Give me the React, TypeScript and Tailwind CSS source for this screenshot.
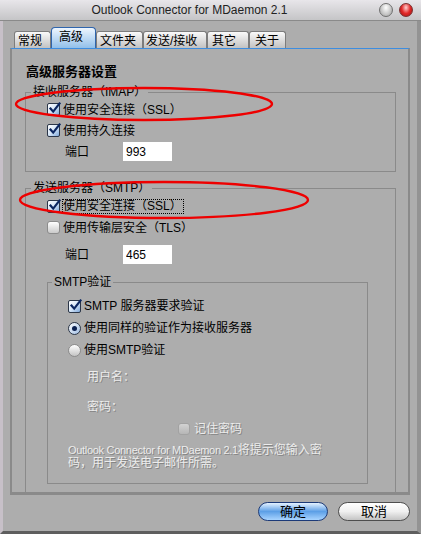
import React from "react";

const tabs = [
  { label: "常规", cls: "w-[37px] pl-[3px]" },
  { label: "高级", cls: "w-[45px] pl-[7px]", active: true },
  { label: "文件夹", cls: "w-[47px] pl-[3px]" },
  { label: "发送/接收", cls: "w-[64px] pl-[2px]" },
  { label: "其它", cls: "w-[42px] pl-[4px]" },
  { label: "关于", cls: "w-[37px] pl-[5px]" },
];

const Check = ({ checked, disabled }: { checked?: boolean; disabled?: boolean }) => {
  if (disabled) {
    return <div className="w-[12px] h-[12px] shrink-0 rounded-[3px] border border-[#a2a2a2] bg-linear-to-b from-[#d2d2d2] to-[#b6b6b6]" />;
  }
  if (!checked) {
    return <div className="w-[13px] h-[13px] shrink-0 rounded-[3px] border border-[#8c8c8c] bg-linear-to-b from-[#ffffff] to-[#cacaca]" />;
  }
  return (
    <div className="relative w-[13px] h-[13px] shrink-0 rounded-[2px] border border-[#2b3648] bg-linear-to-br from-[#ffffff] via-[#d6e6f8] to-[#7fa8da]">
      <svg width="14" height="14" viewBox="0 0 14 14" className="absolute -top-[3px] left-[0px]">
        <path d="M2.5 7.5 L5.2 10.6 L11.5 2.5" fill="none" stroke="#0b2660" strokeWidth="2.2" strokeLinecap="square" />
      </svg>
    </div>
  );
};

const Radio = ({ on }: { on?: boolean }) =>
  on ? (
    <div className="w-[13px] h-[13px] shrink-0 rounded-full border border-[#2b3648] bg-linear-to-br from-[#ffffff] to-[#9fbde3] flex items-center justify-center">
      <div className="w-[5px] h-[5px] rounded-full bg-[#0b2050]" />
    </div>
  ) : (
    <div className="w-[13px] h-[13px] shrink-0 rounded-full border border-[#8c8c8c] bg-linear-to-b from-[#ffffff] to-[#c4c4c4]" />
  );

const dim = "text-[#ececec] [text-shadow:1px_1px_0_#858585]";

export default function App() {
  return (
    <div className="relative w-[421px] h-[534px] overflow-hidden bg-[#adadad] flex flex-col text-[12px] text-black [font-family:'Liberation_Sans','Noto_Sans_CJK_SC',sans-serif]">
      {/* title bar */}
      <div className="h-[21px] shrink-0 flex items-center border-b border-[#8a8a8a] bg-linear-to-b from-[#e8e6ea] to-[#c5c5c7]">
        <div className="flex-1 text-center text-[12px] text-[#222] leading-[20px]">Outlook Connector for MDaemon 2.1</div>
        <div className="flex items-center gap-[6px] pr-[8px]">
          <div className="w-[14px] h-[14px] rounded-full border border-[#707070] bg-radial-[at_50%_30%] from-[#ffffff] to-[#9c9c9c]" />
          <div className="w-[14px] h-[14px] rounded-full border border-[#7a3030] bg-radial-[at_50%_30%] from-[#ffd0d0] via-[#e22a2a] to-[#9a1010]" />
        </div>
      </div>

      <div className="flex-1 flex flex-col border-l-[3px] border-l-[#c7c0c8] border-r-[4px] border-r-[#939393] border-b-[3px] border-b-[#5e5e5e]">
        {/* tabs */}
        <div className="h-[21px] mt-[6px] pl-[11px] flex items-end">
          {tabs.map((t) =>
            t.active ? (
              <div key={t.label} className={`h-[21px] pt-[1px] leading-[16px] border border-b-0 border-[#2f65ad] rounded-t-[4px] bg-linear-to-b from-[#eef6fe] to-[#92c0ea] ${t.cls}`}>
                {t.label}
              </div>
            ) : (
              <div key={t.label} className={`h-[17px] pt-[1px] leading-[16px] border border-b-0 border-[#7c7c7c] rounded-t-[3px] bg-linear-to-b from-[#fafafa] to-[#c2c2c2] ${t.cls}`}>
                {t.label}
              </div>
            )
          )}
        </div>

        {/* panel */}
        <div className="ml-[7px] w-[400px] h-[447px] flex flex-col border-t border-t-[#3d8de0] border-x-2 border-x-[#8a8a8a] border-b-[3px] border-b-[#8a8a8a] pl-[13px] pr-[12px]">
          <div className="mt-[15px] pl-[1px] text-[13px] font-bold leading-[16px]">高级服务器设置</div>

          <fieldset className="mt-[5px] border border-[#8a8a8a] pb-[9px]">
            <legend className="ml-[5px] px-[2px] leading-[14px]">接收服务器（IMAP）</legend>
            <div className="h-[21px] pl-[21px] flex items-center gap-[3px]">
              <Check checked />
              <span>使用安全连接（SSL）</span>
            </div>
            <div className="h-[21px] pl-[21px] flex items-center gap-[3px]">
              <Check checked />
              <span>使用持久连接</span>
            </div>
            <div className="h-[21px] pl-[39px] flex items-center">
              <span className="w-[58px]">端口</span>
              <input readOnly value="993" className="w-[49px] h-[19px] bg-white pl-[3px] text-[12px] outline-none" />
            </div>
          </fieldset>

          <fieldset className="mt-[9px] flex-1 border border-b-0 border-[#8a8a8a]">
            <legend className="ml-[5px] px-[2px] leading-[14px]">发送服务器（SMTP）</legend>
            <div className="h-[21px] mt-[1px] pl-[21px] flex items-center gap-[3px]">
              <Check checked />
              <span className="outline outline-1 outline-dotted outline-black leading-[13px] pr-[1px]">使用安全连接（SSL）</span>
            </div>
            <div className="h-[21px] pl-[21px] flex items-center gap-[3px]">
              <Check />
              <span>使用传输层安全（TLS）</span>
            </div>
            <div className="h-[21px] mt-[6px] pl-[39px] flex items-center">
              <span className="w-[58px]">端口</span>
              <input readOnly value="465" className="w-[49px] h-[19px] bg-white pl-[3px] text-[12px] outline-none" />
            </div>

            <fieldset className="mt-[10px] ml-[21px] w-[321px] border border-[#8a8a8a] pb-[13px]">
              <legend className="ml-[4px] px-[2px] leading-[14px]">SMTP验证</legend>
              <div className="h-[22px] mt-[6px] pl-[20px] flex items-center gap-[3px]">
                <Check checked />
                <span>SMTP 服务器要求验证</span>
              </div>
              <div className="h-[22px] pl-[20px] flex items-center gap-[3px]">
                <Radio on />
                <span>使用同样的验证作为接收服务器</span>
              </div>
              <div className="h-[22px] pl-[20px] flex items-center gap-[3px]">
                <Radio />
                <span>使用SMTP验证</span>
              </div>
              <div className={`h-[22px] mt-[5px] pl-[39px] flex items-center ${dim}`}>用户名：</div>
              <div className={`h-[22px] mt-[8px] pl-[39px] flex items-center ${dim}`}>密码：</div>
              <div className="h-[21px] pl-[130px] flex items-center gap-[4px]">
                <Check disabled />
                <span className={dim}>记住密码</span>
              </div>
              <p className={`mt-[5px] pl-[20px] leading-[13px] ${dim}`}>
                <span className="text-[11px] tracking-[-0.3px]">Outlook Connector for MDaemon 2.1</span>将提示您输入密
                <br />
                码，用于发送电子邮件所需。
              </p>
            </fieldset>
          </fieldset>
        </div>

        {/* buttons */}
        <div className="mt-[7px] pr-[7px] flex justify-end gap-[10px]">
          <button className="w-[70px] h-[19px] rounded-full border border-[#1c3a78] bg-linear-to-b from-[#e4f2ff] via-[#5c9fe6] to-[#a8d4ff] text-[13px] leading-[17px]">
            确定
          </button>
          <button className="w-[72px] h-[19px] rounded-full border border-[#4e4e4e] bg-linear-to-b from-[#ffffff] via-[#f0f0f0] to-[#c4c4c4] text-[13px] leading-[17px]">
            取消
          </button>
        </div>
      </div>

      {/* red annotation ellipses */}
      <svg className="absolute left-0 top-0 pointer-events-none" width="421" height="534">
        <ellipse cx="144" cy="104" rx="128" ry="16" fill="none" stroke="#ee0000" strokeWidth="2.4" />
        <ellipse cx="164" cy="200" rx="144" ry="18" fill="none" stroke="#ee0000" strokeWidth="2.4" />
      </svg>
    </div>
  );
}
